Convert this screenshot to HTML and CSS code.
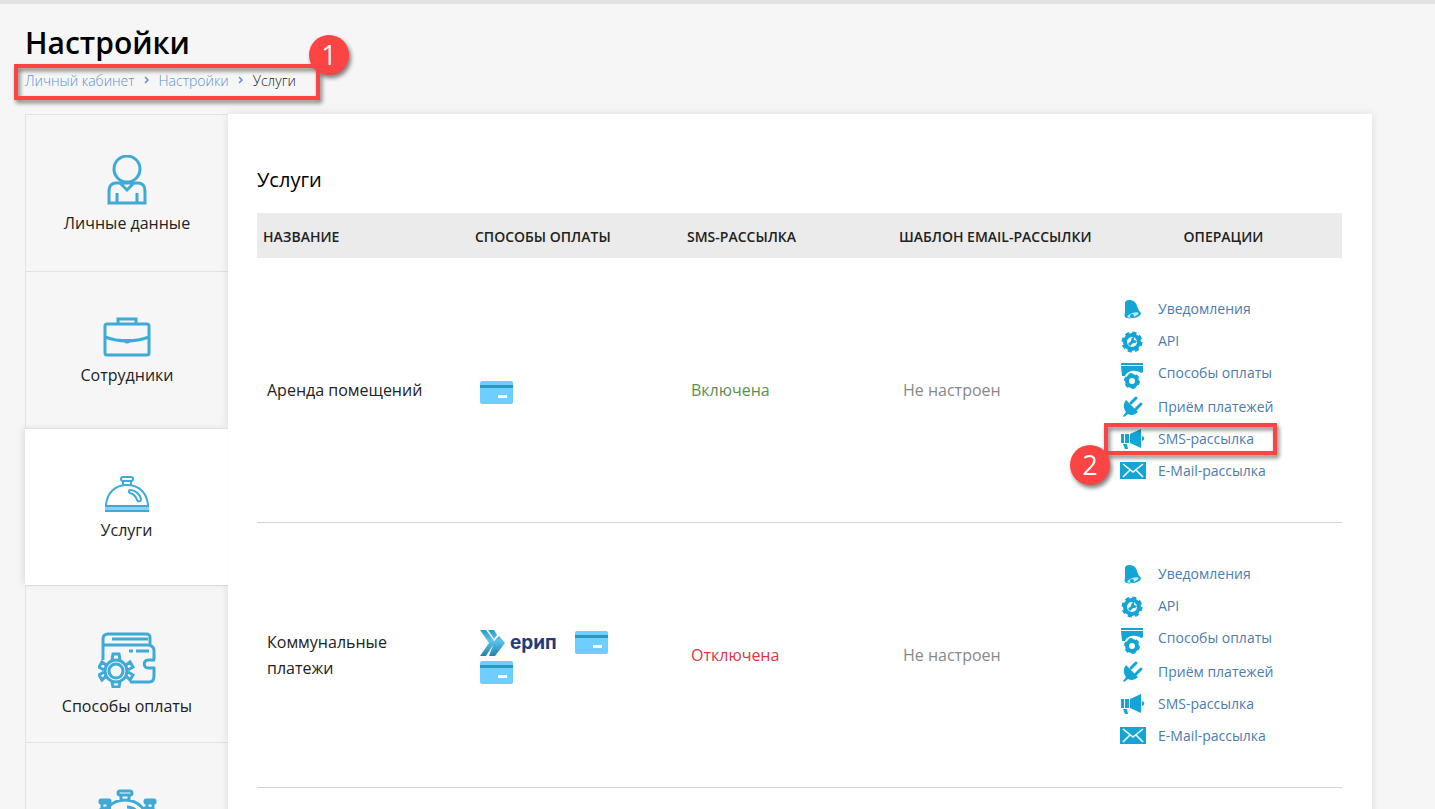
FILE: index.html
```
<!doctype html>
<html lang="ru">
    <head>
        <meta charset="utf-8">
        <title>Настройки</title>
        <link rel="stylesheet" href="styles.css">
    </head>
    <body>
        <svg class="sprite" aria-hidden="true">
            <symbol id="bell" viewBox="0 0 26 32">
                <path fill="#12a5d6" d="M5 10c0-2 2-3 4-3 4 0 7 2 8 6 1 3 2 5 4 7 0 3-5 5-9 5-3 1-6 0-7-1-1-2 0-3 0-5z" />
                <ellipse cx="13" cy="22" rx="6" ry="2" fill="#bfe9f7" transform="rotate(-20 13 22)" />
                <circle cx="12" cy="23" r="2" fill="#12a5d6" />
            </symbol>
            <symbol id="gear" viewBox="0 0 26 32">
                <circle cx="12" cy="17" r="7" fill="none" stroke="#12a5d6" stroke-width="4" />
                <circle cx="12" cy="17" r="9" fill="none" stroke="#12a5d6" stroke-width="3" stroke-dasharray="4 3.07" />
                <path d="m9 20 5-5" stroke="#12a5d6" stroke-width="3" />
                <path d="M14 12a3 3 0 1 0 3 4l-3-1z" fill="#12a5d6" />
            </symbol>
            <symbol id="pay" viewBox="0 0 26 34">
                <path fill="#12a5d6" d="M1 6h22v2H1zM1 9h22v6l-2 1c-3-3-13-4-16 3H2z" />
                <circle cx="12" cy="24" r="5" fill="none" stroke="#12a5d6" stroke-width="4" />
                <circle cx="12" cy="24" r="7" fill="none" stroke="#12a5d6" stroke-width="2" stroke-dasharray="4 3.33" />
            </symbol>
            <symbol id="plug" viewBox="0 0 26 32">
                <path fill="#12a5d6" d="m6 9 12 12c-3 3-7 4-10 2l-4 3-1-1 3-4c-3-4-3-8 0-12z" />
                <path d="m11 12 5-5m0 11 5-5" stroke="#12a5d6" stroke-width="3" stroke-linecap="round" />
            </symbol>
            <symbol id="horn" viewBox="0 0 26 32">
                <path fill="#12a5d6" d="M1 11h3v9H1zM5 11h4v9H5zM10 11l11-5v19l-11-5zM22 13c3 1 3 4 0 5zM3 21h4l1 5H5z" />
            </symbol>
            <symbol id="mail" viewBox="0 0 26 32">
                <path fill="#12a5d6" d="M0 7h26v17H0z" />
                <path fill="none" stroke="#fff" stroke-width="1.5" d="m3 9 10 8L23 9M3 22l7-7m13 7-7-7" />
            </symbol>
            <symbol id="card" viewBox="0 0 33 23">
                <rect width="33" height="23" rx="2" fill="#6dceff" />
                <path fill="#2b96be" d="M0 4h33v3H0z" />
                <path fill="#fff" d="M18 14h9v3h-9z" />
            </symbol>
            <symbol id="cloche" viewBox="0 0 44 36">
                <g fill="none" stroke="#3fa9d8" stroke-width="2">
                    <rect x="16" y="1" width="12" height="4" rx="2" />
                    <path d="M18 5v4m8-4v4M1 30v-1C2 17 10 9 22 9s20 8 21 20v1zM0 35h44" />
                    <path d="M25 14c5 0 10 4 11 9 0 3-3 3-4 1-1-4-4-6-7-7-2-1-1-3 0-3z" />
                </g>
                <path fill="#8fd0ee" d="M0 31h44v3H0z" />
            </symbol>
        </svg>

        <main class="page">
            <h1>Настройки</h1>
            <nav class="breadcrumbs">
                <a href="#">Личный кабинет</a>
                <svg viewBox="0 0 6 8"><path d="m1 1 3 3-3 3" /></svg>
                <a href="#">Настройки</a>
                <svg viewBox="0 0 6 8"><path d="m1 1 3 3-3 3" /></svg>
                <span>Услуги</span>
                <div class="mark mark-path"><b>1</b></div>
            </nav>

            <div class="content">
                <nav class="menu">
                    <a href="#" class="menu-item">
                        <svg width="40" height="50" viewBox="0 0 40 50">
                            <g fill="none" stroke="#3fa9d8" stroke-width="3">
                                <circle cx="20" cy="14" r="13" />
                                <path d="M13 28H9c-5 0-7 4-7 8v12h36V36c0-4-2-8-7-8h-4l-7 7zM10 38v10m20-10v10M13 28h14" />
                            </g>
                        </svg>
                        Личные данные
                    </a>
                    <a href="#" class="menu-item">
                        <svg width="48" height="40" viewBox="0 0 48 40">
                            <g fill="none" stroke="#3fa9d8" stroke-width="3">
                                <rect x="2" y="7" width="44" height="31" rx="2" />
                                <path d="M15 6V2h18v4M2 20c14 5 30 5 44 0" />
                            </g>
                            <path fill="#3fa9d8" d="M20 22h8c0 6-8 6-8 0z" />
                        </svg>
                        Сотрудники
                    </a>
                    <a href="#" class="menu-item active">
                        <svg width="44" height="36"><use href="#cloche" /></svg>
                        Услуги
                    </a>
                    <a href="#" class="menu-item large">
                        <svg width="58" height="56" viewBox="0 0 58 56">
                            <g fill="none" stroke="#3fa9d8" stroke-width="3">
                                <path d="M5 28V7c0-4 2-5 5-5h38c3 0 4 1 4 4v7M14 7h36M5 13h44c5 0 7 2 7 6v9M56 35v9c0 4-2 6-5 6H32M31 19h4m3 0h13" />
                                <path d="M57 28h-7c-5 0-5 8 0 8h7" />
                                <circle cx="18" cy="39" r="11" />
                                <circle cx="18" cy="39" r="7" />
                                <path d="M14 28l1-6h6l1 6M14 50l1 5h6l1-5M8 33l-4-3-3 5 5 3M28 33l4-3 3 5-5 3M8 44l-4 4-3-5 5-3M28 44l4 4 3-5-5-3" />
                            </g>
                        </svg>
                        Способы оплаты
                    </a>
                    <a href="#" class="menu-item large" aria-label="Группы услуг">
                        <svg width="62" height="56" viewBox="0 0 62 56">
                            <g fill="none" stroke="#3fa9d8" stroke-width="3">
                                <rect x="22" y="2" width="14" height="4" rx="2" />
                                <path d="M25 6v5m8-5v5M6 35c0-14 10-24 23-24s23 10 23 24zM31 18c6 0 10 3 12 9" />
                                <rect x="4" y="11" width="10" height="3" rx="1" />
                                <rect x="49" y="11" width="10" height="3" rx="1" />
                                <path d="M6 14v5m6-5v5m39-5v5m6-5v5M1 24c2-3 5-5 9-5h5m33 0h5c3 0 6 2 8 5M4 40h54" />
                            </g>
                        </svg>
                    </a>
                </nav>

                <section class="panel">
                    <h2>Услуги</h2>
                    <table>
                        <thead>
                            <tr>
                                <th>Название</th>
                                <th>Способы оплаты</th>
                                <th>SMS-рассылка</th>
                                <th>Шаблон email-рассылки</th>
                                <th>Операции</th>
                            </tr>
                        </thead>
                        <tbody>
                            <tr>
                                <td>Аренда помещений</td>
                                <td>
                                    <div class="methods">
                                        <svg class="card"><use href="#card" /></svg>
                                    </div>
                                </td>
                                <td class="on">Включена</td>
                                <td class="none">Не настроен</td>
                                <td>
                                    <ul class="actions">
                                        <li><a href="#"><svg><use href="#bell" /></svg>Уведомления</a></li>
                                        <li><a href="#"><svg><use href="#gear" /></svg>API</a></li>
                                        <li><a href="#"><svg class="tall"><use href="#pay" /></svg>Способы оплаты</a></li>
                                        <li><a href="#"><svg><use href="#plug" /></svg>Приём платежей</a></li>
                                        <li>
                                            <a href="#"><svg><use href="#horn" /></svg>SMS-рассылка</a>
                                            <div class="mark mark-sms"><b>2</b></div>
                                        </li>
                                        <li><a href="#"><svg><use href="#mail" /></svg>E-Mail-рассылка</a></li>
                                    </ul>
                                </td>
                            </tr>
                            <tr>
                                <td>Коммунальные платежи</td>
                                <td>
                                    <div class="methods">
                                        <span class="erip">
                                            <svg width="26" height="26" viewBox="0 0 26 26">
                                                <defs>
                                                    <linearGradient id="erip" x1="0" y1="0" x2="0" y2="1">
                                                        <stop offset="0" stop-color="#2f97c4" />
                                                        <stop offset=".4" stop-color="#5cc4ea" />
                                                        <stop offset="1" stop-color="#2481ad" />
                                                    </linearGradient>
                                                </defs>
                                                <path fill="url(#erip)" d="M0 0h6l9 12L6 26H0l9-13zM8 0h6l3 5-3 4zM15 10l4-4 6 7-10 13H9z" />
                                            </svg>
                                            ерип
                                        </span>
                                        <svg class="card"><use href="#card" /></svg>
                                        <svg class="card"><use href="#card" /></svg>
                                    </div>
                                </td>
                                <td class="off">Отключена</td>
                                <td class="none">Не настроен</td>
                                <td>
                                    <ul class="actions">
                                        <li><a href="#"><svg><use href="#bell" /></svg>Уведомления</a></li>
                                        <li><a href="#"><svg><use href="#gear" /></svg>API</a></li>
                                        <li><a href="#"><svg class="tall"><use href="#pay" /></svg>Способы оплаты</a></li>
                                        <li><a href="#"><svg><use href="#plug" /></svg>Приём платежей</a></li>
                                        <li><a href="#"><svg><use href="#horn" /></svg>SMS-рассылка</a></li>
                                        <li><a href="#"><svg><use href="#mail" /></svg>E-Mail-рассылка</a></li>
                                    </ul>
                                </td>
                            </tr>
                        </tbody>
                    </table>
                </section>
            </div>
        </main>
    </body>
</html>
```
FILE: styles.css
```
* {
    box-sizing: border-box;
}

body {
    margin: 0;
    height: 100vh;
    overflow: hidden;
    background: #f6f6f6;
    font-family: "Open Sans", "Noto Sans", sans-serif;
    font-size: 16px;
    color: #222;
}

a {
    color: #4c7cae;
    text-decoration: none;
}

.sprite {
    position: absolute;
    width: 0;
    height: 0;
}

.page {
    padding: 19px 63px 0 25px;
    border-top: 4px solid #e2e2e2;
}

h1 {
    margin: 0;
    font-size: 30px;
    line-height: 40px;
    font-weight: 600;
    color: #000;
}

.breadcrumbs {
    position: relative;
    display: flex;
    align-items: center;
    gap: 9px;
    width: max-content;
    height: 34px;
    margin-bottom: 17px;
    font-size: 14px;
    font-weight: 300;

    a {
        color: #5b93d3;
    }

    svg {
        width: 6px;
        height: 8px;
        fill: none;
        stroke: #5b93d3;
        stroke-width: 1.5;
    }
}

/* numbered red frames */
.mark {
    position: absolute;
    border: 4px solid #fc4444;
    filter: drop-shadow(2px 3px 2px rgba(0, 0, 0, 0.5));
    pointer-events: none;

    b {
        position: absolute;
        width: 40px;
        height: 40px;
        border-radius: 50%;
        background: #fc4444;
        color: #fff;
        font-size: 27px;
        font-weight: 400;
        line-height: 40px;
        text-align: center;
    }
}

.mark-path {
    inset: 1px -24px -3px -11px;

    b {
        top: -33px;
        right: -33px;
    }
}

.mark-sms {
    inset: 0 65px 0 -16px;

    b {
        left: -38px;
        bottom: -34px;
    }
}

.content {
    display: flex;
}

.menu {
    width: 203px;
    flex: none;
    border-left: 1px solid #e4e4e4;
}

.menu-item {
    display: flex;
    flex-direction: column;
    align-items: center;
    justify-content: center;
    gap: 6px;
    height: 157px;
    padding-top: 4px;
    border-top: 1px solid #e2e2e2;
    color: #222;
    line-height: 24px;

    &.large {
        justify-content: flex-start;
        padding-top: 46px;
    }

    &.active {
        position: relative;
        z-index: 2;
        margin-left: -1px;
        background: #fff;
        box-shadow: -3px 0 6px rgba(0, 0, 0, 0.08);
    }
}

.panel {
    position: relative;
    z-index: 1;
    flex: 1;
    padding: 52px 30px 0 29px;
    background: #fff;
    box-shadow: 0 0 10px rgba(0, 0, 0, 0.1);
}

h2 {
    margin: 0 0 19px;
    font-size: 20px;
    line-height: 28px;
    font-weight: 400;
    color: #000;
}

table {
    width: 100%;
    table-layout: fixed;
    border-collapse: separate;
    border-spacing: 0;
}

th {
    width: 212px;
    height: 45px;
    padding: 2px 6px 0;
    background: #ebebeb;
    font-size: 14px;
    font-weight: 600;
    text-align: left;
    text-transform: uppercase;
    white-space: nowrap;

    &:last-child {
        width: auto;
        text-align: center;
    }
}

td {
    height: 265px;
    padding: 0 20px 0 10px;
    border-bottom: 1px solid #d2d2d2;
    line-height: 26px;
    vertical-align: middle;

    &:last-child {
        padding: 0 0 0 15px;
    }

    &.on {
        color: #5c8f4e;
    }

    &.off {
        color: #dc3545;
    }

    &.none {
        color: #888;
    }
}

.methods {
    display: flex;
    flex-wrap: wrap;
    align-items: center;
    gap: 6px 18px;
    width: 140px;
    padding: 4px 0 0 1px;
}

.card {
    width: 33px;
    height: 23px;
}

.erip {
    display: flex;
    align-items: center;
    gap: 4px;
    height: 24px;
    color: #253a78;
    font-family: "Inter", sans-serif;
    font-size: 19px;
    font-weight: 700;
}

.actions {
    margin: 0;
    padding: 0;
    list-style: none;
    font-size: 14px;
    line-height: 32px;

    li {
        position: relative;
    }

    a {
        display: flex;
        gap: 12px;
    }

    svg {
        width: 26px;
        height: 32px;
    }

    .tall {
        height: 34px;
    }
}
```
